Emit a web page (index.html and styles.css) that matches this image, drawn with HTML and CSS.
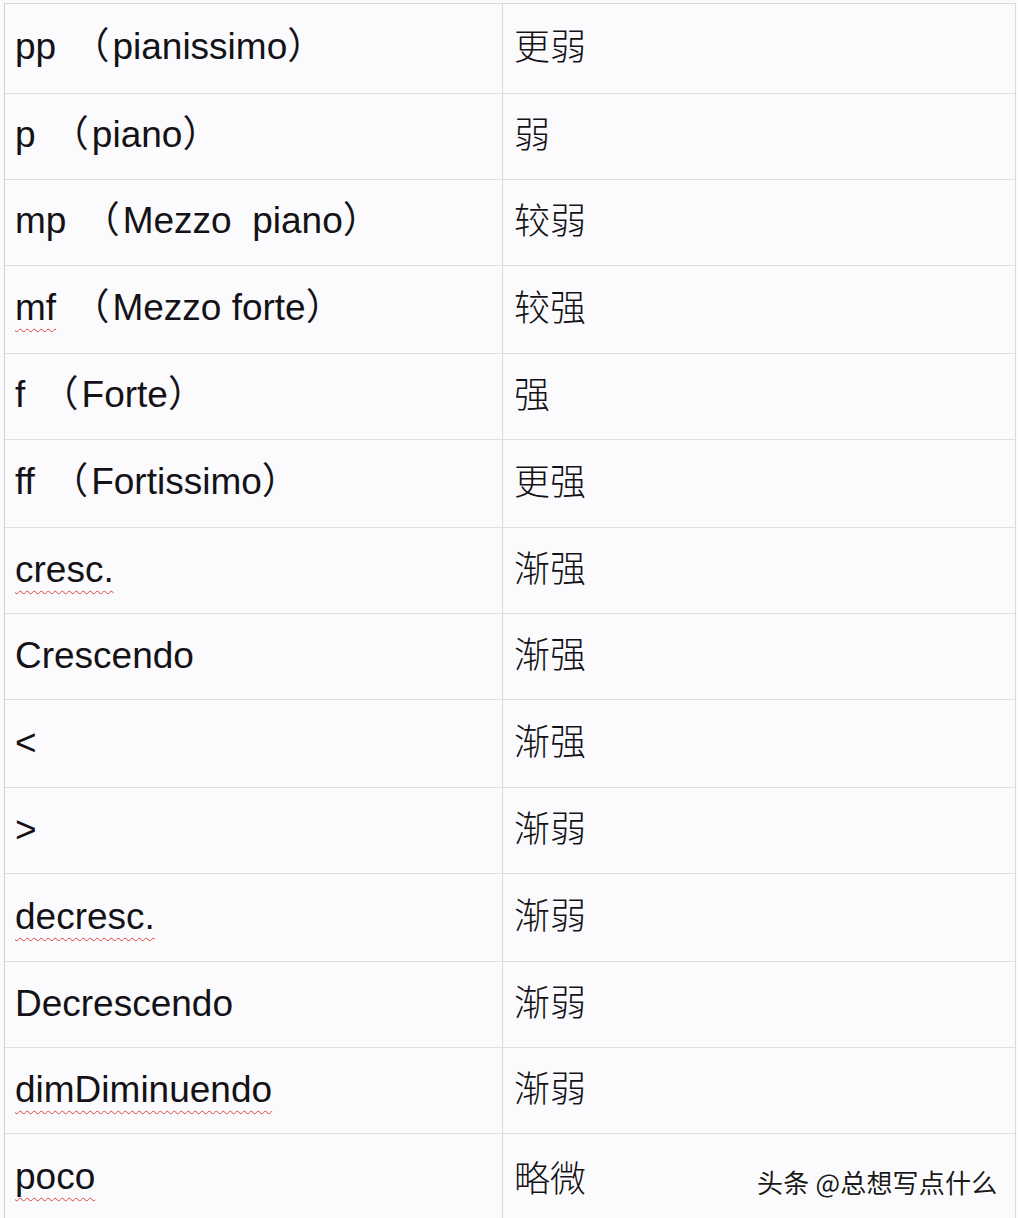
FILE: index.html
```html
<!DOCTYPE html>
<html lang="zh-CN">
<head>
<meta charset="utf-8">
<title>力度记号</title>
<link rel="stylesheet" href="styles.css">
</head>
<body>
<div class="page">
  <div class="sheet">
    <div class="cell term paren"><span>pp <span class="lp">（</span>pianissimo）</span></div><div class="cell meaning">更弱</div>
    <div class="cell term paren"><span>p <span class="lp">（</span>piano）</span></div><div class="cell meaning">弱</div>
    <div class="cell term paren"><span>mp <span class="lp">（</span>Mezzo  piano）</span></div><div class="cell meaning">较弱</div>
    <div class="cell term paren"><span><span class="spell">mf</span> <span class="lp">（</span>Mezzo forte）</span></div><div class="cell meaning">较强</div>
    <div class="cell term paren"><span>f <span class="lp">（</span>Forte）</span></div><div class="cell meaning">强</div>
    <div class="cell term paren"><span>ff <span class="lp">（</span>Fortissimo）</span></div><div class="cell meaning">更强</div>
    <div class="cell term"><span class="spell">cresc.</span></div><div class="cell meaning">渐强</div>
    <div class="cell term">Crescendo</div><div class="cell meaning">渐强</div>
    <div class="cell term">&lt;</div><div class="cell meaning">渐强</div>
    <div class="cell term">&gt;</div><div class="cell meaning">渐弱</div>
    <div class="cell term"><span class="spell">decresc.</span></div><div class="cell meaning">渐弱</div>
    <div class="cell term">Decrescendo</div><div class="cell meaning">渐弱</div>
    <div class="cell term"><span class="spell">dimDiminuendo</span></div><div class="cell meaning">渐弱</div>
    <div class="cell term last"><span class="spell">poco</span></div><div class="cell meaning last">略微</div>
  </div>
  <div class="watermark">头条 @总想写点什么</div>
</div>
</body>
</html>
```

FILE: styles.css
```css
html, body {
  margin: 0;
  padding: 0;
  background: #fbfbfd;
}
.page {
  position: relative;
  width: 1018px;
  height: 1218px;
  overflow: hidden;
  padding: 3px 0 0 4px;
  box-sizing: border-box;
}
.sheet {
  display: grid;
  grid-template-columns: 498px 513px;
  grid-template-rows: 90px 86px 86px 88px 86px 88px 86px 86px 88px 86px 88px 86px 86px 100px;
  border-top: 1px solid #dadadc;
  border-left: 1px solid #d0d0d2;
  width: 1011px;
}
.cell {
  box-sizing: border-box;
  border-right: 1px solid #dadadc;
  border-bottom: 1px solid #dedee0;
  display: flex;
  align-items: center;
  color: #141216;
  white-space: pre;
}
.cell.last {
  border-bottom: none;
  align-items: flex-start;
  padding-top: 22px;
}
.term {
  font-family: "Liberation Sans", "Noto Sans CJK SC", sans-serif;
  font-size: 37px;
  padding-left: 10px;
  padding-bottom: 2px;
}
.term.paren {
  padding-bottom: 12px;
}
.lp {
  margin-left: 6px;
  margin-right: 3px;
}
.meaning {
  font-family: "Noto Sans CJK SC", sans-serif;
  font-size: 36px;
  font-weight: 300;
  padding-left: 11px;
  padding-bottom: 9px;
}
.meaning.last { padding-top: 16px; }
.spell {
  text-decoration: underline wavy #e0403a;
  text-decoration-thickness: 1px;
  text-underline-offset: 8px;
}
.watermark {
  position: absolute;
  left: 757px;
  top: 1163px;
  font-family: "Noto Sans CJK SC", sans-serif;
  font-size: 26px;
  color: #1a1a1a;
  letter-spacing: 0.2px;
  text-shadow: 1px 1px 0 #fff, -1px -1px 0 #fff, 1px -1px 0 #fff, -1px 1px 0 #fff;
  white-space: nowrap;
}
```
